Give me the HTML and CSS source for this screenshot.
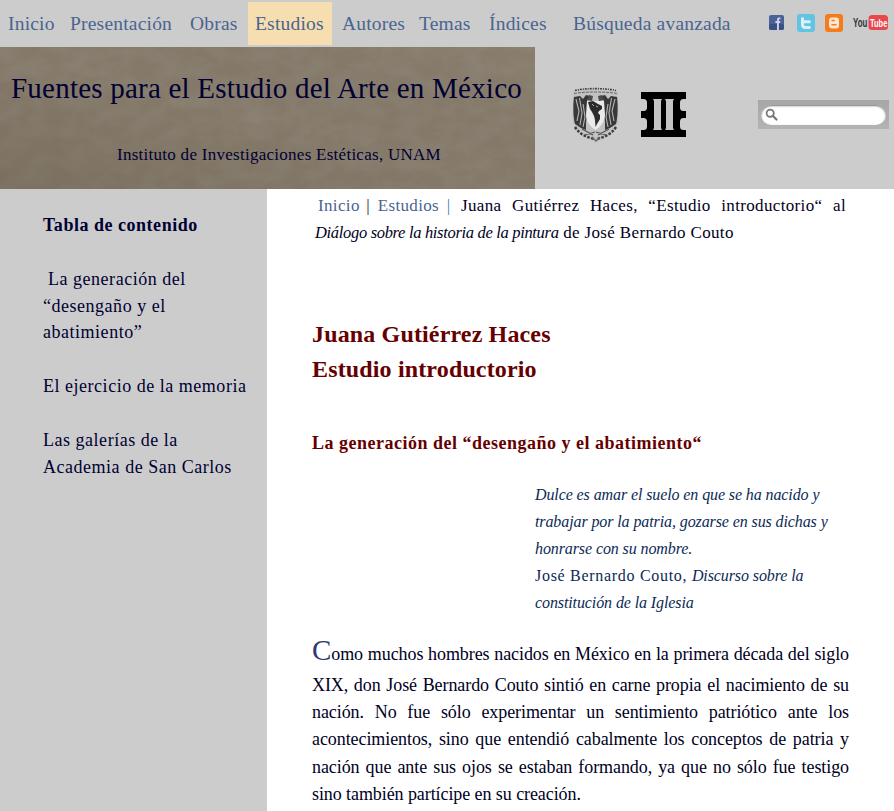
FILE: index.html
```html
<!DOCTYPE html>
<html lang="es">
<head>
<meta charset="utf-8">
<title>Fuentes para el Estudio del Arte en México</title>
<link rel="stylesheet" href="styles.css">
</head>
<body>
<header class="top">
  <nav class="nav">
    <a class="nav-item">Inicio</a>
    <a class="nav-item">Presentación</a>
    <a class="nav-item">Obras</a>
    <a class="nav-item nav-active">Estudios</a>
    <a class="nav-item">Autores</a>
    <a class="nav-item">Temas</a>
    <a class="nav-item">Índices</a>
    <a class="nav-item">Búsqueda avanzada</a>
    <div class="social">
      <svg class="ic-fb" width="15" height="15" viewBox="0 0 15 15"><rect width="15" height="15" rx="2" fill="#4a6296"/><rect y="9" width="15" height="6" rx="2" fill="#3a5084"/><path d="M8 15V8H6.400V6H8V4.600C8 3 9 2.400 10.200 2.400H11.400V4.300H10.500C10 4.300 9.900 4.600 9.900 5V6H11.400L11.100 8H9.900V15Z" fill="#cdd5e6"/></svg>
      <svg class="ic-tw" width="18" height="18" viewBox="0 0 18 18"><rect width="18" height="18" rx="3" fill="#63c3e4"/><path d="M5 3.200C6.200 3 7 3.600 7 4.700V6.200H12.300C13.600 6.200 14 7.200 13.800 8.200 13.600 9 12.900 9.300 12 9.300H7V10.600C7 11.600 7.600 12 8.600 12H12.200C13.400 12 14 12.700 13.800 13.700 13.600 14.500 13 14.900 12 14.900H8C5.600 14.900 4 13.400 4 11V4.700C4 4 4.300 3.400 5 3.200Z" fill="#d9f1f9"/></svg>
      <svg class="ic-bl" width="18" height="18" viewBox="0 0 18 18"><rect width="18" height="18" rx="3" fill="#f47c1c"/><rect x="4" y="3.400" width="10" height="11.200" rx="3" fill="#fde6d0"/><rect x="6.300" y="5.700" width="3.600" height="1.600" rx=".8" fill="#f47c1c"/><rect x="6.300" y="9.900" width="5.400" height="1.600" rx=".8" fill="#f47c1c"/></svg>
      <svg class="ic-yt" width="36" height="16" viewBox="0 0 36 16"><text transform="translate(0 12) scale(.66 1)" class="yt-you">You</text><rect x="15.500" y="0" width="19.500" height="15" rx="3.500" fill="#e8474c"/><text transform="translate(17 12) scale(.68 1)" class="yt-tube">Tube</text></svg>
    </div>
  </nav>
  <div class="masthead">
    <div class="banner">
      <svg class="paper" width="535" height="142" aria-hidden="true">
        <defs>
          <linearGradient id="shade" x1="0" y1="1" x2="1" y2="0">
            <stop offset="0" stop-color="#5f5545" stop-opacity=".28"/>
            <stop offset=".5" stop-color="#5f5545" stop-opacity="0"/>
            <stop offset="1" stop-color="#a49a8a" stop-opacity=".14"/>
          </linearGradient>
          <filter id="grain" x="0" y="0" width="100%" height="100%">
            <feTurbulence type="fractalNoise" baseFrequency="0.045 0.065" numOctaves="4" seed="11"/>
            <feColorMatrix values="0 0 0 0 0.32  0 0 0 0 0.29  0 0 0 0 0.24  0.55 0 0 0 -0.18"/>
          </filter>
        </defs>
        <rect width="535" height="142" fill="#857a6a"/>
        <rect width="535" height="142" filter="url(#grain)"/>
        <rect width="535" height="142" fill="url(#shade)"/>
      </svg>
      <h1 class="site-title">Fuentes para el Estudio del Arte en México</h1>
      <p class="site-sub">Instituto de Investigaciones Estéticas, UNAM</p>
    </div>
    <div class="logos">
      <svg class="unam" width="47" height="55" viewBox="0 0 47 55">
        <path d="M1 4C10 0 37 0 46 4L46.500 36 38 48 28 53 24 55 19 53 9 48 .5 36Z" fill="#c2c2c2"/>
        <path d="M3 3.500C12 1 35 1 44 3.500" fill="none" stroke="#444" stroke-width="1.600" stroke-dasharray="2 1 1 1"/>
        <path d="M2 6.500C12 4.500 35 4.500 45 6.500" fill="none" stroke="#666" stroke-width="1" stroke-dasharray="3 1"/>
        <path d="M2 10C1 18 1 30 3 37L9 41 14 43 14 35 16 24 15 14 18 9 14 8 11 12 8 9Z" fill="#383838"/>
        <path d="M45 10C46 18 46 30 44 37L38 41 33 43 33 35 31 24 32 14 29 9 33 8 36 12 39 9Z" fill="#383838"/>
        <path d="M4 12L7 24 5 34M7.500 11L10 26 8 38M11 17L13 30 11 40M43 12L40 24 42 34M39.500 11L37 26 39 38M36 17L34 30 36 40" fill="none" stroke="#b5b5b5" stroke-width="1.100"/>
        <path d="M15 13L17 8 21 9 20 14ZM32 13L30 8 26 9 27 14Z" fill="#4a4a4a"/>
        <path d="M15 14H32L33 28C33 35 28 40 23.500 43 19 40 14 35 14 28Z" fill="#eaeaea"/>
        <path d="M16 15L21 14 26 17 30 19 30 22 27 24 26 26 28 28 28 32 25 37 23.500 40 23 33 22 29 20 25 18 22Z" fill="#2b2b2b"/>
        <path d="M20 17L22 19M24 19L26 20" stroke="#c8c8c8" stroke-width=".8"/>
        <path d="M3 40C8 48 15 50 22 52M44 40C39 48 32 50 25 52" fill="none" stroke="#3a3a3a" stroke-width="2.400" stroke-dasharray="2.500 1.500"/>
        <path d="M10 42L21 48M37 42L26 48M13 48L23 45M34 48L24 45" stroke="#555" stroke-width="1.300"/>
        <path d="M20 50L24 54 28 50" fill="none" stroke="#666" stroke-width="1.300"/>
      </svg>
      <svg class="iie" width="45" height="45" viewBox="0 0 45 45">
        <rect width="45" height="45" fill="#000"/>
        <path d="M0 7H2.500Q6 7 6 10.500V15.500Q6 19 2.500 19H0ZM0 26H2.500Q6 26 6 29.500V34.500Q6 38 2.500 38H0Z" fill="#ccc"/>
        <path d="M45 7H42.500Q39 7 39 10.500V15.500Q39 19 42.500 19H45ZM45 26H42.500Q39 26 39 29.500V34.500Q39 38 42.500 38H45Z" fill="#ccc"/>
        <path d="M12 7H21L20 9V36L21 38H12L13 36V9ZM24 7H33L32 9V36L33 38H24L25 36V9Z" fill="#c4c4c4"/>
      </svg>
    </div>
    <form class="search">
      <div class="search-pill">
        <svg class="search-icon" width="13" height="13" viewBox="0 0 13 13"><circle cx="5.200" cy="5.200" r="3.600" fill="none" stroke="#777" stroke-width="1.800"/><path d="M8 8L11.500 11.500" stroke="#777" stroke-width="2.200" stroke-linecap="round"/></svg>
      </div>
    </form>
  </div>
</header>
<div class="page">
  <aside class="side">
    <p class="toc-title">Tabla de contenido</p>
    <p class="toc-item">&nbsp;La generación del “desengaño y el abatimiento”</p>
    <p class="toc-item">El ejercicio de la memoria</p>
    <p class="toc-item">Las galerías de la Academia de San Carlos</p>
  </aside>
  <main class="main">
    <p class="crumbs"><a class="crumb">Inicio</a> <span class="sep">|</span> <a class="crumb">Estudios</a> <span class="sep sep-b">|</span> Juana Gutiérrez Haces, “Estudio introductorio“ al <em class="work">Diálogo sobre la historia de la pintura</em> de José Bernardo Couto</p>
    <h2 class="title">Juana Gutiérrez Haces<br>Estudio introductorio</h2>
    <h3 class="section">La generación del “desengaño y el abatimiento“</h3>
    <blockquote class="quote"><em>Dulce es amar el suelo en que se ha nacido y trabajar por la patria, gozarse en sus dichas y honrarse con su nombre.</em><br>José Bernardo Couto, <em>Discurso sobre la constitución de la Iglesia</em></blockquote>
    <p class="body"><span class="cap">C</span>omo muchos hombres nacidos en México en la primera década del siglo XIX, don José Bernardo Couto sintió en carne propia el nacimiento de su nación. No fue sólo experimentar un sentimiento patriótico ante los acontecimientos, sino que entendió cabalmente los conceptos de patria y nación que ante sus ojos se estaban formando, ya que no sólo fue testigo sino también partícipe en su creación.</p>
  </main>
</div>
</body>
</html>
```
FILE: styles.css
```css
html, body { margin: 0; padding: 0; }
body {
  background: #ccc;
  font-family: "Liberation Serif", serif;
  color: #000033;
  height: 811px;
  overflow: hidden;
}
p, h1, h2, h3, blockquote { margin: 0; font-weight: normal; }

.nav {
  height: 47px;
  box-sizing: border-box;
  padding: 2px 0 2px 8px;
  display: grid;
  grid-template-columns: 62px 120px 58px 94px 77px 70px 84px 196px 1fr;
  align-items: stretch;
}
.nav-item {
  font-size: 19.500px;
  line-height: 43px;
  color: #4a6491;
  letter-spacing: .2px;
  white-space: nowrap;
}
.nav-active {
  background: #f6deb0;
  justify-self: start;
  width: 84px;
  box-sizing: border-box;
  padding-left: 7px;
}
.social { display: flex; align-items: center; margin-top: -2px; }
.ic-tw { margin-left: 13px; }
.ic-bl { margin-left: 10px; }
.ic-yt { margin-left: 10px; }
.yt-you { font: bold 12px "Liberation Sans", sans-serif; fill: #333; }
.yt-tube { font: bold 11px "Liberation Sans", sans-serif; fill: #fff; }

.masthead { display: flex; height: 142px; }
.banner {
  width: 535px;
  height: 142px;
  position: relative;
  overflow: hidden;
}
.paper { position: absolute; left: 0; top: 0; }
.site-title {
  position: relative;
  padding: 22px 0 0 11px;
  font-size: 29px;
  line-height: 38px;
  letter-spacing: .22px;
  white-space: nowrap;
}
.site-sub {
  position: relative;
  padding: 38px 0 0 117px;
  font-size: 17px;
  line-height: 20px;
  letter-spacing: .27px;
  white-space: nowrap;
}
.logos { display: flex; margin-left: 37px; align-items: flex-start; }
.unam { margin-top: 40px; filter: blur(.35px); }
.iie { margin: 45px 0 0 22px; filter: blur(.3px); }
.search {
  margin: 53px 0 0 72px;
  width: 131px;
  height: 29px;
  box-sizing: border-box;
  padding: 5px 3px 4px;
  background: linear-gradient(#a6a6a6, #b4b4b4);
}
.search-pill {
  height: 20px;
  border-radius: 10px;
  background: #fff;
  box-shadow: inset 0 1px 2px #777;
  padding: 3px 0 0 4px;
  box-sizing: border-box;
}
.search-icon { display: block; }

.page { display: flex; height: 622px; }
.side {
  width: 267px;
  box-sizing: border-box;
  padding: 23px 20px 0 43px;
  font-size: 18px;
  line-height: 26.800px;
  letter-spacing: .52px;
}
.toc-title { font-weight: bold; margin-bottom: 27px; }
.toc-item { margin-bottom: 27px; }
.main {
  flex: 1;
  background: #fff;
  box-sizing: border-box;
  padding: 3px 45px 0 45px;
}
.crumbs {
  font-size: 17px;
  line-height: 27px;
  letter-spacing: .35px;
  text-align: justify;
  text-indent: 6px;
  padding-right: 3px;
  color: #000022;
}
.crumb { color: #4a6491; }
.sep { color: #223; margin: 0 -3px 0 -4px; }
.sep-b { color: #4a7ab0; margin: 0 0 0 -3px; }
.work {
  font-size: 16.500px;
  letter-spacing: -.32px;
  white-space: nowrap;
  margin-left: 3px;
}
.title {
  margin-top: 71px;
  font-size: 24px;
  line-height: 35px;
  letter-spacing: .15px;
  font-weight: bold;
  color: #660000;
}
.section {
  margin-top: 43px;
  font-size: 18px;
  line-height: 27px;
  letter-spacing: .5px;
  font-weight: bold;
  color: #660000;
}
.quote {
  margin: 24px 0 0 223px;
  font-size: 16px;
  line-height: 27px;
  letter-spacing: .7px;
  color: #0b2a55;
}
.quote em { letter-spacing: -.1px; }
.body {
  margin-top: 19px;
  font-size: 18px;
  line-height: 27.200px;
  letter-spacing: -.08px;
  text-align: justify;
  color: #000022;
}
.cap {
  display: inline-block;
  font-size: 29px;
  color: #2f3a70;
  line-height: 30px;
  margin-bottom: 7px;
}
```
